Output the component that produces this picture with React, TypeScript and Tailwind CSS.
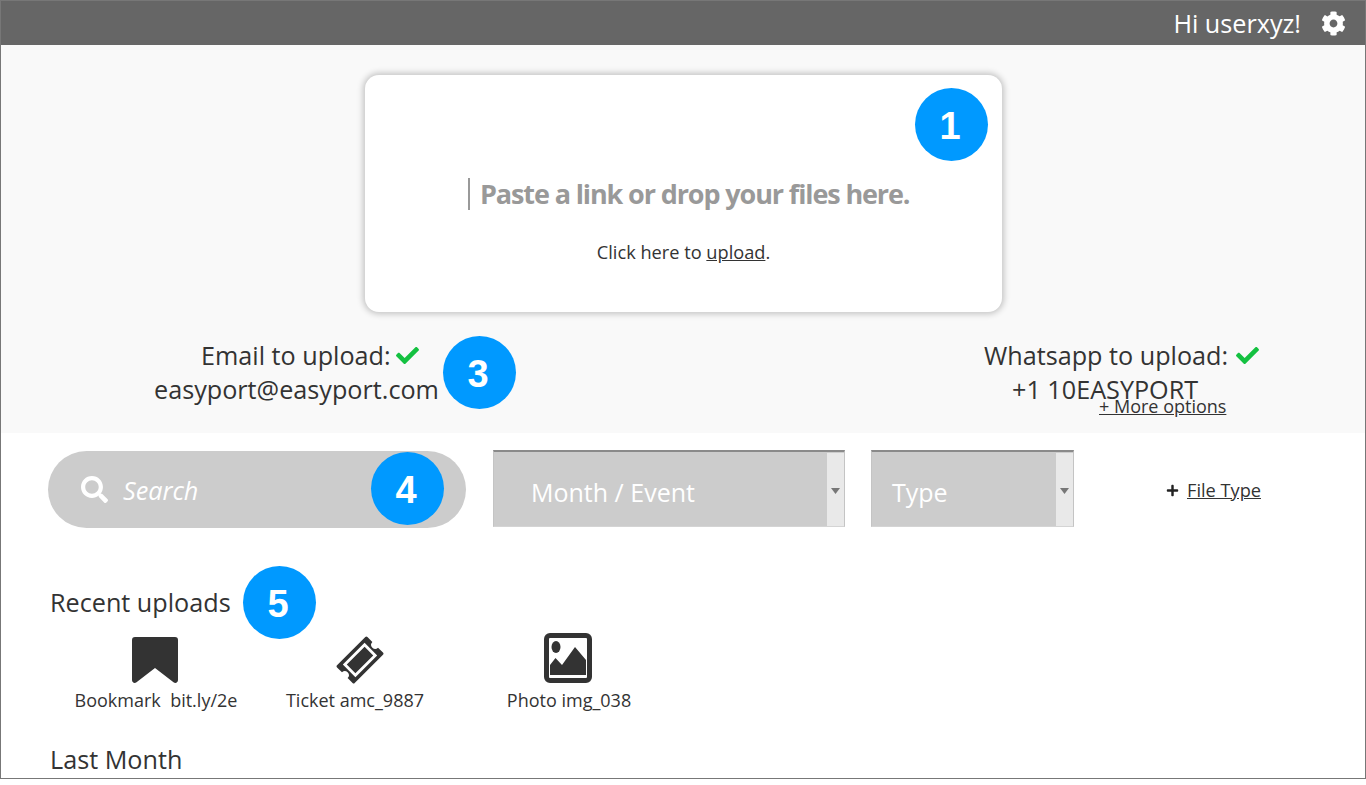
import React from "react";
import { FaCog, FaCheck, FaSearch, FaPlus } from "react-icons/fa";

function Badge({ n, className }: { n: string; className: string }) {
  return (
    <div className={`absolute flex h-[73px] w-[73px] items-center justify-center rounded-full bg-[#0099ff] pr-[3px] pt-[3px] text-[38px] font-bold text-white ${className}`} style={{ fontFamily: '"Liberation Sans", Arial, sans-serif' }}>
      {n}
    </div>
  );
}

function SelectBox({ label, className, labelPad }: { label: string; className: string; labelPad: string }) {
  return (
    <div className={`flex h-[77px] border-t-2 border-b border-l border-r border-t-[#8a8a8a] border-b-[#d4d4d4] border-l-[#c4c4c4] border-r-[#c4c4c4] bg-[#cccccc] ${className}`}>
      <div className={`flex-1 pt-[23px] text-[25px] leading-[34px] text-white ${labelPad}`}>{label}</div>
      <div className="mt-[1px] flex w-[17px] items-start justify-center bg-[#e9e9e9] pt-[35px]">
        <svg width="9" height="6" viewBox="0 0 9 6"><path d="M0 0h9L4.500 6z" fill="#777" /></svg>
      </div>
    </div>
  );
}

function Bookmark() {
  return (
    <svg width="46" height="46" viewBox="0 0 46 46" className="mr-[2px] mt-[2px]">
      <path fill="#333" d="M3 0h40a3 3 0 0 1 3 3v40c0 2.500-2.500 3.800-4.500 2.200L23 31 4.500 45.200C2.500 46.800 0 45.500 0 43V3a3 3 0 0 1 3-3z" />
    </svg>
  );
}

function Ticket() {
  return (
    <svg width="48" height="48" viewBox="0 0 48 48" className="ml-[10px] mt-[2px]">
      <g transform="rotate(-45 24 24)">
        <path fill="#333" d="M4 11.500h40a1.500 1.500 0 0 1 1.500 1.500V20a4 4 0 0 0 0 8v7a1.500 1.500 0 0 1-1.500 1.500H4A1.500 1.500 0 0 1 2.500 35v-7a4 4 0 0 0 0-8v-7A1.500 1.500 0 0 1 4 11.500z" />
        <rect x="10" y="16.500" width="28" height="15" fill="#333" stroke="#fff" strokeWidth="2.800" />
      </g>
    </svg>
  );
}

function Picture() {
  return (
    <svg width="48" height="50" viewBox="0 0 48 50" className="-mt-[2px] mr-[2px]">
      <rect x="2.500" y="2.500" width="43" height="45" rx="3.500" fill="none" stroke="#333" strokeWidth="5" />
      <ellipse cx="12" cy="14" rx="4.500" ry="6" fill="#333" />
      <path fill="#333" d="M6 42V32l5.500-7 6.500 7 13-18 11 13v15z" />
    </svg>
  );
}

function Upload({ icon, label, center }: { icon: React.ReactNode; label: string; center: string }) {
  return (
    <div className={`flex w-[200px] flex-col items-center ${center}`}>
      <div className="flex h-[52px] items-center justify-center">{icon}</div>
      <div className="mt-[2px] whitespace-pre text-[18px] leading-[26px] text-[#333]">{label}</div>
    </div>
  );
}

export default function App() {
  return (
    <div className="h-[785px] w-[1366px] overflow-hidden bg-white" style={{ fontFamily: '"Open Sans", sans-serif' }}>
      <div className="relative h-[779px] overflow-hidden border border-b border-[#777] bg-white">
        <header className="flex h-[44px] items-center justify-end bg-[#666666] pr-[19px] text-white">
          <span className="mr-[20px] text-[25.2px] leading-[32px]">Hi userxyz!</span>
          <FaCog size={25} />
        </header>

        <section className="h-[388px] bg-[#f9f9f9] pt-[30px]">
          <div className="ml-[364px] flex h-[237px] w-[637px] flex-col items-center rounded-[14px] bg-white shadow-[0_0_6px_2px_rgba(0,0,0,0.22)]">
            <div className="mt-[103px] flex items-center self-start pl-[103px]">
              <div className="mr-[10px] h-[32px] w-[2px] bg-[#999]" />
              <div className="whitespace-nowrap text-[27px] font-bold leading-[32px] tracking-[-1.12px] text-[#999]">Paste a link or drop your files here.</div>
            </div>
            <div className="mt-[30px] text-[18.200px] leading-[24px] text-[#333]">
              Click here to <span className="underline">upload</span>.
            </div>
          </div>

          <div className="flex pt-[26px] text-[25.2px] leading-[34px] text-[#333]">
            <div className="ml-[153px] w-[290px] whitespace-nowrap">
              <div className="flex items-center pl-[47px]">
                <span>Email to upload:</span>
                <FaCheck className="ml-[5px] text-[#14c141]" size={23} />
              </div>
              <div>easyport@easyport.com</div>
            </div>
            <div className="ml-[540px] w-[290px] whitespace-nowrap">
              <div className="flex items-center">
                <span>Whatsapp to upload:</span>
                <FaCheck className="ml-[8px] text-[#14c141]" size={23} />
              </div>
              <div className="pl-[28px]">+1 10EASYPORT</div>
              <div className="-mt-[12px] ml-[115px] w-fit text-[18px] leading-[24px] underline">+ More options</div>
            </div>
          </div>
        </section>

        <section className="flex items-start pl-[47px] pt-[17px]">
          <div className="mt-[1px] flex h-[77px] w-[418px] items-center rounded-full bg-[#cccccc] pl-[33px] text-white">
            <FaSearch size={27} />
            <span className="ml-[15px] text-[25.2px] italic leading-[32px]">Search</span>
          </div>
          <SelectBox label="Month / Event" className="ml-[27px] w-[352px]" labelPad="pl-[37px]" />
          <SelectBox label="Type" className="ml-[26px] w-[203px]" labelPad="pl-[20px]" />
          <div className="ml-[92px] mt-[27px] flex items-center text-[#333]">
            <FaPlus size={13} className="text-[#222]" />
            <span className="ml-[8px] text-[18.2px] leading-[26px] underline">File Type</span>
          </div>
        </section>

        <section className="pl-[49px] pt-[57px]">
          <h2 className="text-[25.2px] font-normal leading-[34px] text-[#333]">Recent uploads</h2>
          <div className="-ml-[49px] mt-[14px] flex">
            <Upload center="ml-[55px]" label="Bookmark  bit.ly/2e" icon={<Bookmark />} />
            <Upload center="-ml-[1px]" label="Ticket amc_9887" icon={<Ticket />} />
            <Upload center="ml-[14px]" label="Photo img_038" icon={<Picture />} />
          </div>
          <h2 className="mt-[29px] text-[25.2px] font-normal leading-[34px] text-[#333]">Last Month</h2>
        </section>

        <Badge n="1" className="left-[914px] top-[87px]" />
        <Badge n="3" className="left-[442px] top-[335px]" />
        <Badge n="4" className="left-[370px] top-[451px]" />
        <Badge n="5" className="left-[242px] top-[565px]" />
      </div>
    </div>
  );
}
